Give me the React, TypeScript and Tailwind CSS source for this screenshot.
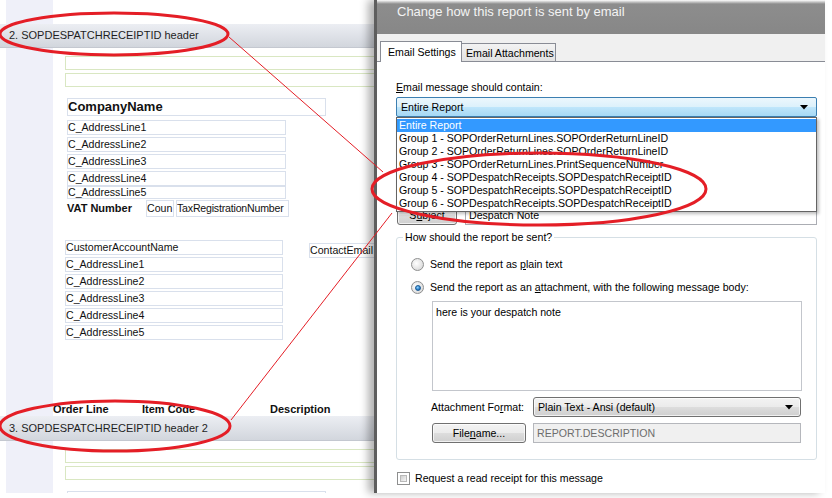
import React from "react";

function Box({ className = "", children }: { className?: string; children?: React.ReactNode }) {
  return (
    <div className={"shrink-0 border border-[#d9e0ec] whitespace-nowrap overflow-hidden " + className}>
      {children}
    </div>
  );
}

function Green({ className = "" }: { className?: string }) {
  return <div className={"shrink-0 ml-[12px] h-[14px] w-[330px] border border-[#d9e7c2] " + className} />;
}

function Strip() {
  return <div className="w-[53px] shrink-0 border-l-[6px] border-white bg-[#eff0f9]" />;
}

function Band({ text, h }: { text: string; h: string }) {
  return (
    <div
      className={
        "shrink-0 flex items-center pl-[9px] text-[11px] text-[#1e1e1e] whitespace-nowrap bg-[linear-gradient(to_bottom,#eceef3,#d2d6dd)] border-b border-[#c4c8d0] " +
        h
      }
    >
      {text}
    </div>
  );
}

function Arrow() {
  return (
    <svg width="8" height="5" viewBox="0 0 8 5" className="shrink-0">
      <polygon points="0,0 8,0 4,4.5" fill="#000" />
    </svg>
  );
}

function Radio({ checked }: { checked?: boolean }) {
  return (
    <div className="w-[13px] h-[13px] shrink-0 rounded-full border border-[#8e8f8f] bg-[radial-gradient(circle_at_40%_40%,#ffffff,#e3e3e3_60%,#cfcfcf)] flex items-center justify-center">
      {checked && (
        <div className="w-[6px] h-[6px] rounded-full bg-[radial-gradient(circle_at_40%_35%,#8fd3ff,#2a7fc9_60%,#0d4a86)] border border-[#1b5a94]" />
      )}
    </div>
  );
}

const btn =
  "border border-[#707070] rounded-[3px] bg-[linear-gradient(to_bottom,#f3f3f3_0%,#ebebeb_50%,#dddddd_51%,#cfcfcf_100%)] shadow-[inset_0_0_0_1px_rgba(255,255,255,0.7)]";

export default function App() {
  return (
    <div className="relative w-[832px] h-[498px] overflow-hidden bg-white font-['Liberation_Sans',Arial,sans-serif]">
      <div className="flex h-[493px]">
        {/* Left: report designer */}
        <div className="w-[374px] h-[493px] shrink-0 flex flex-col overflow-hidden text-[#111]">
          <div className="h-[24px] shrink-0 flex">
            <Strip />
            <div className="flex-1" />
          </div>
          <Band text="2. SOPDESPATCHRECEIPTID header" h="h-[24px]" />
          <div className="h-[368px] shrink-0 flex">
            <Strip />
            <div className="flex-1 flex flex-col text-[10.6px] leading-[13px]">
              <Green className="mt-[8px]" />
              <Green className="mt-[3px]" />
              <Box className="mt-[11px] ml-[14px] w-[259px] h-[18px] font-bold text-[13px] leading-[16px]">CompanyName</Box>
              <Box className="mt-[4px] ml-[14px] w-[219px] h-[15px]">C_AddressLine1</Box>
              <Box className="mt-[2px] ml-[14px] w-[219px] h-[15px]">C_AddressLine2</Box>
              <Box className="mt-[2px] ml-[14px] w-[219px] h-[15px]">C_AddressLine3</Box>
              <Box className="mt-[2px] ml-[14px] w-[219px] h-[15px]">C_AddressLine4</Box>
              <Box className="ml-[14px] w-[219px] h-[13px] leading-[11px]">C_AddressLine5</Box>
              <div className="mt-[1px] ml-[14px] h-[17px] flex items-center shrink-0">
                <div className="w-[79px] font-bold text-[11px]">VAT Number</div>
                <Box className="w-[28px] h-[17px] leading-[15px]">Coun</Box>
                <Box className="ml-[2px] w-[113px] h-[17px] leading-[15px] tracking-[-0.2px]">TaxRegistrationNumber</Box>
              </div>
              <div className="mt-[23px] flex shrink-0">
                <div className="ml-[12px] w-[218px] flex flex-col gap-[2px]">
                  <Box className="h-[15px]">CustomerAccountName</Box>
                  <Box className="h-[15px]">C_AddressLine1</Box>
                  <Box className="h-[15px]">C_AddressLine2</Box>
                  <Box className="h-[15px]">C_AddressLine3</Box>
                  <Box className="h-[15px]">C_AddressLine4</Box>
                  <Box className="h-[15px]">C_AddressLine5</Box>
                </div>
                <Box className="ml-[26px] mt-[3px] w-[70px] h-[15px]">ContactEmail</Box>
              </div>
              <div className="mt-auto h-[14px] flex font-bold text-[11px] leading-[14px] whitespace-nowrap shrink-0">
                <div className="w-[89px]">Order Line</div>
                <div className="w-[128px]">Item Code</div>
                <div>Description</div>
              </div>
            </div>
          </div>
          <Band text="3. SOPDESPATCHRECEIPTID header 2" h="h-[25px]" />
          <div className="flex-1 flex min-h-0">
            <Strip />
            <div className="flex-1 flex flex-col">
              <Green className="mt-[8px]" />
              <Green className="mt-[3px]" />
              <div className="mt-[11px] ml-[14px] w-[259px] h-[10px] border border-[#d9e0ec] shrink-0" />
            </div>
          </div>
        </div>

        {/* Right: dialog */}
        <div className="relative z-10 w-[451px] h-[493px] shrink-0 flex flex-col bg-white border-l-[3px] border-[#5e5e5e] shadow-[-6px_0_8px_rgba(0,0,0,0.3)] text-[10.6px] leading-[13px] text-black">
          <div className="h-[34px] shrink-0 pl-[20px] pt-[5px] bg-[linear-gradient(to_bottom,#ffffff_0px,#8d8d8d_4px,#878787_100%)] text-[13px] leading-[13px] text-[#f3f3f3] whitespace-nowrap">
            Change how this report is sent by email
          </div>
          <div className="h-[28px] shrink-0 flex items-end pl-[3px] bg-[#f0f0f0] border-b border-[#898c95]">
            <div className="h-[21px] w-[82px] -mb-px bg-white border border-b-0 border-[#898c95] pl-[7px] pt-[4px] whitespace-nowrap relative z-10">
              Email Settings
            </div>
            <div className="h-[18px] w-[94px] border border-b-0 border-l-0 border-[#898c95] bg-[linear-gradient(to_bottom,#f3f3f3,#e2e2e2)] pl-[4px] pt-[3px] whitespace-nowrap">
              Email Attachments
            </div>
          </div>

          <div className="relative flex-1 flex flex-col pl-[19px] pr-[8px]">
            <div className="mt-[19px] whitespace-nowrap">
              <span className="underline">E</span>mail message should contain:
            </div>
            <div className="mt-[3px] h-[20px] flex items-center justify-between px-[4px] pr-[8px] border border-[#3c7fb1] rounded-[2px] bg-[linear-gradient(to_bottom,#ecf7fd_0%,#dcf1fb_50%,#bfe6fb_51%,#a6d8f4_100%)]">
              <span>Entire Report</span>
              <Arrow />
            </div>

            <div className="mt-[88px] h-[20px] flex">
              <div className={"ml-[1px] w-[60px] h-[20px] flex items-center justify-center " + btn}>
                S<span className="underline">u</span>bject
              </div>
              <div className="ml-[8px] flex-1 h-[20px] border border-[#abadb3] flex items-center pl-[3px]">Despatch Note</div>
            </div>

            <fieldset className="mt-[6px] w-[421px] border border-[#d5dfe5] rounded-[3px] pb-[16px]">
              <legend className="ml-[6px] px-[2px] leading-[13px]">How should the report be sent?</legend>
              <div className="mt-[14px] ml-[14px] h-[13px] flex items-center gap-[6px] whitespace-nowrap">
                <Radio />
                <span>
                  Send the report as <span className="underline">p</span>lain text
                </span>
              </div>
              <div className="mt-[10px] ml-[14px] h-[13px] flex items-center gap-[6px] whitespace-nowrap">
                <Radio checked />
                <span>
                  Send the report as an <span className="underline">a</span>ttachment, with the following message body:
                </span>
              </div>
              <div className="mt-[7px] ml-[35px] w-[370px] h-[90px] border border-[#c3c6cc] pl-[3px] pt-[4px]">
                here is your despatch note
              </div>
              <div className="mt-[6px] ml-[34px] h-[20px] flex items-center">
                <div className="w-[102px] whitespace-nowrap">
                  Attachment Fo<span className="underline">r</span>mat:
                </div>
                <div className={"w-[268px] h-[20px] flex items-center justify-between pl-[4px] pr-[7px] " + btn}>
                  <span>Plain Text - Ansi (default)</span>
                  <Arrow />
                </div>
              </div>
              <div className="mt-[6px] ml-[35px] h-[20px] flex items-center">
                <div className={"w-[94px] h-[20px] flex items-center justify-center " + btn}>
                  File<span className="underline">n</span>ame...
                </div>
                <div className="ml-[7px] w-[268px] h-[20px] border border-[#b5b7bc] bg-[#f0f0f0] flex items-center pl-[3px] text-[#6d6d6d]">
                  REPORT.DESCRIPTION
                </div>
              </div>
            </fieldset>

            <div className="mt-[12px] ml-[1px] h-[13px] flex items-center gap-[5px] whitespace-nowrap">
              <div className="w-[13px] h-[13px] border border-[#8e8f8f] bg-white p-[2px]">
                <div className="w-full h-full bg-[linear-gradient(135deg,#cfcfcf,#f6f6f6)] border border-[#b9b9b9]" />
              </div>
              <span>Request a read receipt for this message</span>
            </div>

            {/* open dropdown list */}
            <div className="absolute left-[19px] top-[55px] w-[421px] h-[95px] bg-white border border-[#646464] shadow-[2px_2px_3px_rgba(0,0,0,0.25)] flex flex-col pt-[1px] whitespace-nowrap">
              <div className="h-[13px] bg-[#3399ff] text-white pl-[2px]">Entire Report</div>
              <div className="h-[13px] pl-[2px]">Group 1 - SOPOrderReturnLines.SOPOrderReturnLineID</div>
              <div className="h-[13px] pl-[2px]">Group 2 - SOPOrderReturnLines.SOPOrderReturnLineID</div>
              <div className="h-[13px] pl-[2px]">Group 3 - SOPOrderReturnLines.PrintSequenceNumber</div>
              <div className="h-[13px] pl-[2px]">Group 4 - SOPDespatchReceipts.SOPDespatchReceiptID</div>
              <div className="h-[13px] pl-[2px]">Group 5 - SOPDespatchReceipts.SOPDespatchReceiptID</div>
              <div className="h-[13px] pl-[2px]">Group 6 - SOPDespatchReceipts.SOPDespatchReceiptID</div>
            </div>
          </div>
        </div>
      </div>

      {/* annotations */}
      <svg className="absolute inset-0 pointer-events-none z-20" width="832" height="498" viewBox="0 0 832 498">
        <ellipse cx="114" cy="34" rx="114" ry="21" fill="none" stroke="#e41e26" strokeWidth="3" />
        <ellipse cx="115" cy="426" rx="115" ry="25" fill="none" stroke="#e41e26" strokeWidth="3" />
        <ellipse cx="539" cy="189" rx="167" ry="36" fill="none" stroke="#e41e26" strokeWidth="3" />
        <line x1="229" y1="37" x2="383" y2="172" stroke="#e41e26" strokeWidth="1" />
        <line x1="231" y1="420" x2="392" y2="213" stroke="#e41e26" strokeWidth="1" />
      </svg>
    </div>
  );
}
